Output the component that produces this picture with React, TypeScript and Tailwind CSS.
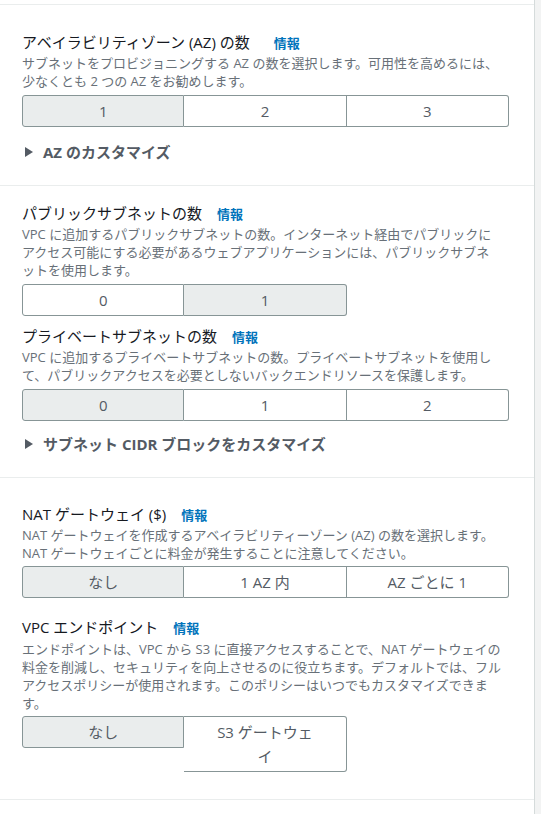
const font = "font-['Open_Sans','Noto_Sans_CJK_JP',sans-serif]";

type SegProps = {
  options: string[];
  selected: number;
};

function Segments({ options, selected }: SegProps) {
  return (
    <div className="grid grid-cols-3 w-[487px] items-start">
      {options.map((opt, i) => (
        <button
          key={opt}
          className={[
            "border border-[#879596] px-[30px] py-[3px] text-[15px] leading-[24px] text-[#545b64] text-center",
            i > 0 ? "border-l-0" : "rounded-l-[3px]",
            i === options.length - 1 ? "rounded-r-[3px]" : "",
            i === selected ? "bg-[#eaeded]" : "bg-white",
          ].join(" ")}
        >
          {opt}
        </button>
      ))}
    </div>
  );
}

function Title({ text, wide }: { text: string; wide?: boolean }) {
  return (
    <div className="text-[15px] leading-[20px] text-[#16191f]">
      {text}
      <span
        className={
          (wide ? "ml-[24px]" : "ml-[15px]") +
          " text-[13px] font-bold text-[#0073bb]"
        }
      >
        情報
      </span>
    </div>
  );
}

function Desc({ lines }: { lines: string }) {
  return (
    <p className="max-w-[479px] text-[13px] leading-[18px] text-[#687078]">
      {lines}
    </p>
  );
}

function Expander({ text }: { text: string }) {
  return (
    <div className="flex items-center gap-[10px] text-[15px] leading-[20px] font-bold text-[#545b64]">
      <svg width="8" height="10" viewBox="0 0 8 10" className="ml-[3px]">
        <path d="M0 0 L8 5 L0 10 Z" fill="#545b64" />
      </svg>
      <span>{text}</span>
    </div>
  );
}

export default function App() {
  return (
    <div className={`flex w-[541px] h-[814px] bg-white ${font}`}>
      <div className="w-[535px] border-r border-[#d5dbdb] flex flex-col">
        <div className="h-[4px]" />

        {/* AZ */}
        <section className="border-t border-[#eaeded] px-[22px] pt-[27px] pb-[23px]">
          <Title text="アベイラビリティゾーン (AZ) の数" wide />
          <div className="mt-[1px]">
            <Desc lines="サブネットをプロビジョニングする AZ の数を選択します。可用性を高めるには、少なくとも 2 つの AZ をお勧めします。" />
          </div>
          <div className="mt-[5px]">
            <Segments options={["1", "2", "3"]} selected={0} />
          </div>
          <div className="mt-[15px]">
            <Expander text="AZ のカスタマイズ" />
          </div>
        </section>

        {/* Subnets */}
        <section className="border-t border-[#eaeded] px-[22px] pt-[17px] pb-[23px]">
          <Title text="パブリックサブネットの数" />
          <div className="mt-[1px]">
            <Desc lines="VPC に追加するパブリックサブネットの数。インターネット経由でパブリックにアクセス可能にする必要があるウェブアプリケーションには、パブリックサブネットを使用します。" />
          </div>
          <div className="mt-[5px]">
            <Segments options={["0", "1"]} selected={1} />
          </div>
          <div className="mt-[10px]">
            <Title text="プライベートサブネットの数" />
          </div>
          <div className="mt-[1px]">
            <Desc lines="VPC に追加するプライベートサブネットの数。プライベートサブネットを使用して、パブリックアクセスを必要としないバックエンドリソースを保護します。" />
          </div>
          <div className="mt-[5px]">
            <Segments options={["0", "1", "2"]} selected={0} />
          </div>
          <div className="mt-[13px]">
            <Expander text="サブネット CIDR ブロックをカスタマイズ" />
          </div>
        </section>

        {/* NAT / endpoints */}
        <section className="border-t border-[#eaeded] px-[22px] pt-[26px] pb-[27px]">
          <Title text="NAT ゲートウェイ ($)" />
          <div className="mt-[1px]">
            <Desc lines="NAT ゲートウェイを作成するアベイラビリティーゾーン (AZ) の数を選択します。NAT ゲートウェイごとに料金が発生することに注意してください。" />
          </div>
          <div className="mt-[4px]">
            <Segments options={["なし", "1 AZ 内", "AZ ごとに 1"]} selected={0} />
          </div>
          <div className="mt-[19px]">
            <Title text="VPC エンドポイント" />
          </div>
          <div className="mt-[2px]">
            <Desc lines="エンドポイントは、VPC から S3 に直接アクセスすることで、NAT ゲートウェイの料金を削減し、セキュリティを向上させるのに役立ちます。デフォルトでは、フルアクセスポリシーが使用されます。このポリシーはいつでもカスタマイズできます。" />
          </div>
          <div className="mt-[4px]">
            <Segments options={["なし", "S3 ゲートウェイ"]} selected={0} />
          </div>
        </section>
        <div className="border-t border-[#eaeded]" />
      </div>
      <div className="flex-1 bg-[#f2f3f3]" />
    </div>
  );
}
